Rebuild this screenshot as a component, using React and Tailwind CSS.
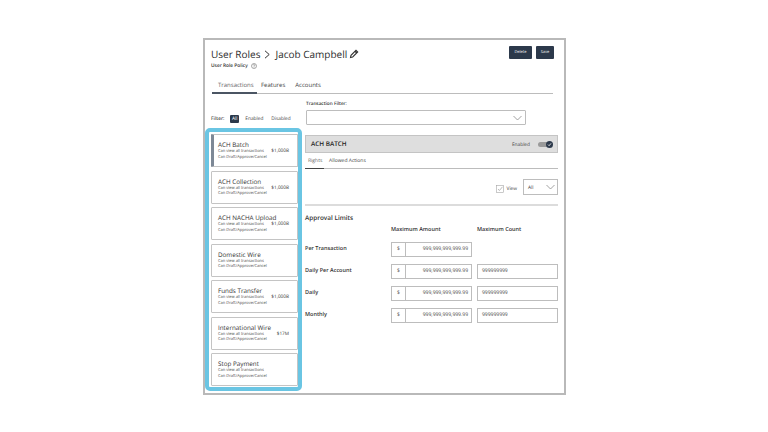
import React from "react";

const cards = [
  ["ACH Batch", "$1,000B", true],
  ["ACH Collection", "$1,000B"],
  ["ACH NACHA Upload", "$1,000B"],
  ["Domestic Wire", ""],
  ["Funds Transfer", "$1,000B"],
  ["International Wire", "$17M"],
  ["Stop Payment", ""],
];

function Card({ name, amount, active }) {
  return (
    <div className={`relative h-[33px] w-[87px] shrink-0 rounded-[1px] border border-[#c4c4c4] bg-white pt-[5px] ${active ? "border-l-[3px] border-l-[#7d8896] pl-[4px]" : "pl-[6px]"}`}>
      <div className="whitespace-nowrap text-[6.3px] leading-[9px] text-[#333]">{name}</div>
      <div className="whitespace-nowrap text-[4px] leading-[5.5px] text-[#444]">Can view all transactions</div>
      <div className="whitespace-nowrap text-[4px] leading-[5.5px] text-[#444]">Can Draft/Approve/Cancel</div>
      {amount && <div className="absolute right-[8px] top-[13px] text-[4.7px] leading-[6px] text-[#333]">{amount}</div>}
    </div>
  );
}

function Limit({ label, count = true }) {
  return (
    <div className="flex h-[22px] items-start">
      <div className="w-[86px] pt-[2px] text-[5.5px] font-semibold leading-[9px] text-[#333]">{label}</div>
      <div className="flex h-[15px] w-[81px] border border-[#bdbdbd] text-[#444]">
        <div className="flex w-[14px] items-center justify-center border-r border-[#bdbdbd] text-[5px]">$</div>
        <div className="flex flex-1 items-center justify-end pr-[3px] text-[5px]">999,999,999,999.99</div>
      </div>
      {count && (
        <div className="ml-[5px] flex h-[15px] w-[81px] items-center border border-[#bdbdbd] pl-[4px] text-[5px] text-[#444]">999999999</div>
      )}
    </div>
  );
}

export default function App() {
  return (
    <div className="h-[432px] w-[768px] overflow-hidden bg-white pl-[203px] pt-[38px] font-['Open_Sans',sans-serif] antialiased [text-rendering:geometricPrecision]">
      <div className="h-[357px] w-[363px] border-2 border-[#b9b9b9] bg-white">
        <div className="ml-[6px] flex h-[22px] w-[343px] items-start justify-between pt-[6px]">
          <div className="mt-[1px] flex h-[14px] items-center text-[10px] font-medium leading-[14px] text-[#2b2b2b]">
            <span>User Roles</span>
            <svg className="ml-[3px] mr-[4px] h-[9px] w-[8px]" viewBox="0 0 8 9" fill="none" stroke="#333" strokeWidth="1">
              <path d="M2 0.8 L6.2 4.5 L2 8.2" />
            </svg>
            <span>Jacob Campbell</span>
            <svg className="ml-[2px] h-[10px] w-[10px]" viewBox="0 0 10 10" fill="none" stroke="#333" strokeWidth="1.1">
              <path d="M1.5 8.5 L2 6.3 L7 1.3 L8.7 3 L3.7 8 Z M6 2.3 L7.7 4" />
            </svg>
          </div>
          <div className="flex gap-[4px]">
            <div className="flex h-[13px] w-[23px] items-center justify-center rounded-[1px] bg-[#2c394b] text-[4px] text-white">Delete</div>
            <div className="flex h-[13px] w-[18px] items-center justify-center rounded-[1px] bg-[#2c394b] text-[4px] text-white">Save</div>
          </div>
        </div>
        <div className="ml-[6px] flex h-[8px] items-center text-[4.8px] font-semibold leading-[8px] text-[#333]">
          User Role Policy
          <svg className="ml-[3px] h-[6px] w-[6px]" viewBox="0 0 6 6" fill="none" stroke="#555" strokeWidth="0.5">
            <circle cx="3" cy="3" r="2.5" />
            <path d="M2.2 2.3 C2.2 1.4 3.8 1.4 3.8 2.3 C3.8 3 3 3 3 3.7 M3 4.3 V4.8" />
          </svg>
        </div>
        <div className="ml-[7px] mt-[3px] flex h-[21px] w-[341px] border-b border-[#bcbcbc] text-[6px] leading-[17px] text-[#444]">
          <div className="h-[21px] w-[45px] border-b-2 border-[#4b5563] pl-[6px] pt-[4px] text-[#666]">Transactions</div>
          <div className="ml-[4px] pt-[4px]">Features</div>
          <div className="ml-[10px] pt-[4px]">Accounts</div>
        </div>
        <div className="ml-[6px] flex h-[34px]">
          <div className="flex w-[95px] items-center pt-[15px] text-[4.8px] leading-[8px] text-[#444]">
            <span className="font-semibold">Filter:</span>
            <span className="ml-[6px] flex h-[8px] w-[9px] items-center justify-center rounded-[1px] bg-[#2c394b] text-white">All</span>
            <span className="ml-[6px]">Enabled</span>
            <span className="ml-[8px]">Disabled</span>
          </div>
          <div className="pt-[7px]">
            <div className="text-[4.7px] font-semibold leading-[7px] text-[#333]">Transaction Filter:</div>
            <div className="mt-[2px] flex h-[15px] w-[220px] items-center justify-end rounded-[1px] border border-[#bdbdbd] pr-[3px]">
              <svg className="h-[6px] w-[9px]" viewBox="0 0 9 6" fill="none" stroke="#8a8a8a" strokeWidth="0.8">
                <path d="M0.5 1 L4.5 5 L8.5 1" />
              </svg>
            </div>
          </div>
        </div>
        <div className="flex">
          <div className="flex h-[263px] w-[97px] shrink-0 flex-col gap-[3.5px] rounded-[5px] border-4 border-[#6ac5e3] pl-[2px] pt-[2px]">
            {cards.map(([n, a, act]) => (
              <Card key={n} name={n} amount={a} active={act} />
            ))}
          </div>
          <div className="ml-[3px] w-[253px] pt-[7px]">
            <div className="flex h-[18px] items-center justify-between border border-[#c4c4c4] bg-[#dedede] pl-[5px] pr-[5px]">
              <span className="text-[6.4px] font-semibold text-[#222]">ACH BATCH</span>
              <div className="flex items-center">
                <span className="pt-[1px] text-[4.8px] leading-[8px] text-[#444]">Enabled</span>
                <div className="relative ml-[8px] h-[5px] w-[14px] rounded-[3px] bg-[#9a9a9a]">
                  <svg className="absolute -right-[1px] -top-[1px] h-[7px] w-[7px]" viewBox="0 0 7 7">
                    <circle cx="3.5" cy="3.5" r="3.5" fill="#2c394b" />
                    <path d="M2 3.6 L3.1 4.7 L5 2.4" fill="none" stroke="#fff" strokeWidth="0.8" />
                  </svg>
                </div>
              </div>
            </div>
            <div className="flex h-[16px] border-b border-[#bcbcbc] text-[5px] leading-[16px] text-[#444]">
              <div className="h-[16px] w-[19px] border-b border-[#444] pl-[3px] text-[#666]">Rights</div>
              <div className="ml-[5px]">Allowed Actions</div>
            </div>
            <div className="flex h-[37px] items-start justify-end border-b-2 border-[#dcdcdc] pt-[10px]">
              <div className="flex h-[16px] items-center pt-[3px] text-[4.8px] leading-[8px] text-[#444]">
                <svg className="h-[8px] w-[8px]" viewBox="0 0 8 8" fill="none">
                  <rect x="0.5" y="0.5" width="7" height="7" stroke="#a5a5a5" strokeWidth="0.6" />
                  <path d="M2 4 L3.4 5.5 L6.5 1.8" stroke="#8f8f8f" strokeWidth="0.6" />
                </svg>
                <span className="ml-[3px]">View</span>
              </div>
              <div className="ml-[6px] flex h-[16px] w-[35px] items-center justify-between border border-[#bdbdbd] pl-[4px] pr-[2px] text-[4.8px] leading-[8px] text-[#444]">
                <span className="pt-[1px]">All</span>
                <svg className="h-[6px] w-[9px]" viewBox="0 0 9 6" fill="none" stroke="#8a8a8a" strokeWidth="0.8">
                  <path d="M0.5 1 L4.5 5 L8.5 1" />
                </svg>
              </div>
            </div>
            <div className="mt-[7px] text-[6.4px] font-semibold leading-[10px] text-[#333]">Approval Limits</div>
            <div className="mt-[1px] flex h-[13px] text-[5.5px] font-semibold leading-[10px] text-[#333]">
              <div className="ml-[86px] w-[86px]">Maximum Amount</div>
              <div>Maximum Count</div>
            </div>
            <div className="mt-[5px]">
              <Limit label="Per Transaction" count={false} />
              <Limit label="Daily Per Account" />
              <Limit label="Daily" />
              <Limit label="Monthly" />
            </div>
          </div>
        </div>
      </div>
    </div>
  );
}
